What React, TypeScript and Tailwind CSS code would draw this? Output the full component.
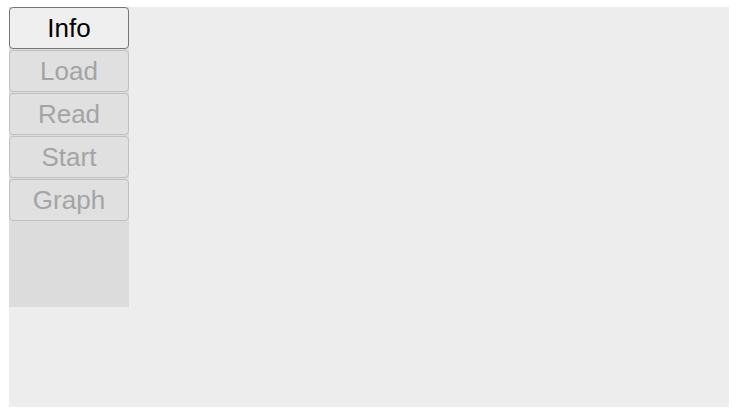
const tabs = ["Info", "Load", "Read", "Start", "Graph"];

export default function App() {
  return (
    <div className="min-h-[420px] bg-white pl-[9px] pt-[7px] font-['Liberation_Sans',Arial,sans-serif]">
      <div className="flex h-[400px] w-[720px] items-start bg-[#ededed]">
        <div className="flex h-[300px] w-[120px] flex-col gap-px bg-[#dcdcdc]">
          {tabs.map((t, i) =>
            i === 0 ? (
              <button
                key={t}
                type="button"
                className="h-[42px] w-[120px] rounded-[4px] border-[1.5px] border-[#767676] bg-[#efefef] text-[26px] leading-none text-black"
              >
                {t}
              </button>
            ) : (
              <button
                key={t}
                type="button"
                disabled
                className="h-[42px] w-[120px] rounded-[4px] border-[1.5px] border-[#c0c0c0] bg-[#e0e0e0] text-[26px] leading-none text-[#a4a4a4]"
              >
                {t}
              </button>
            ),
          )}
        </div>
      </div>
    </div>
  );
}
